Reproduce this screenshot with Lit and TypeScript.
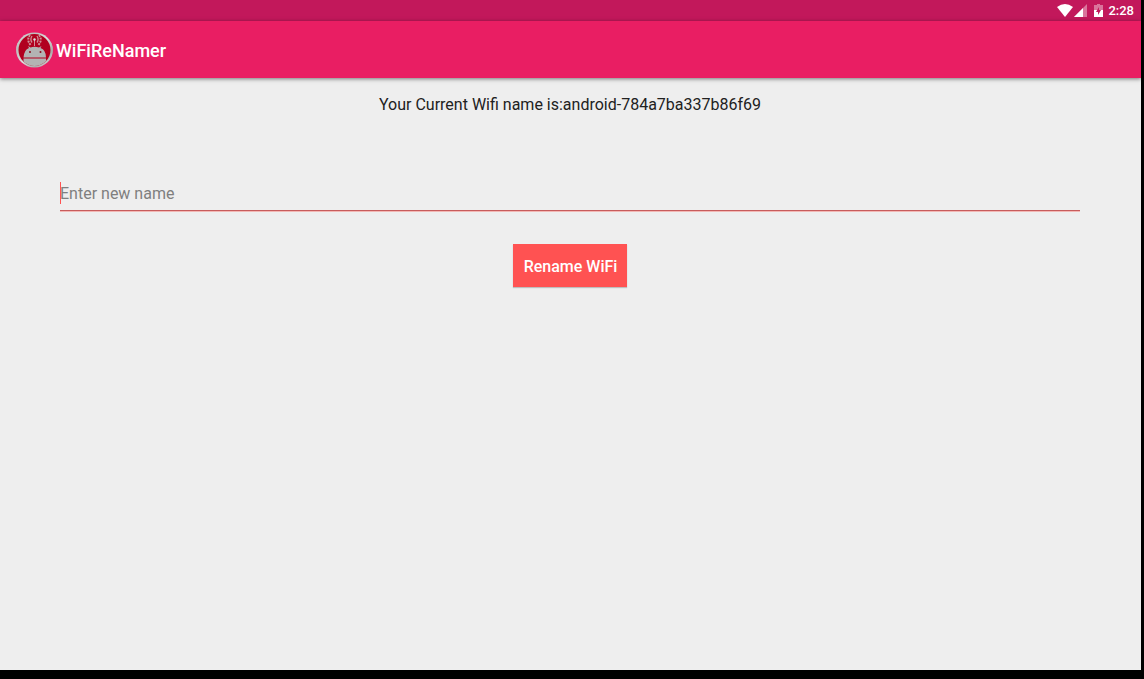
import { LitElement, html, css } from "lit";
import { customElement, property, state } from "lit/decorators.js";

@customElement("status-bar")
class StatusBar extends LitElement {
  static styles = css`
    :host {
      display: flex;
      align-items: center;
      justify-content: flex-end;
      height: 21px;
      padding-right: 7px;
      background: #c2185b;
      color: #fff;
      font-size: 13px;
      font-weight: 500;
      line-height: 21px;
    }
    .signal {
      margin-left: 1px;
    }
    .battery {
      margin: 0 5px 0 6px;
    }
    svg {
      display: block;
    }
  `;

  render() {
    return html`
      <svg width="16" height="13" viewBox="0 0 16 13" aria-label="Wi-Fi">
        <path fill="#fff" d="M0 3Q8-3 16 3L8 13Z" />
      </svg>
      <svg class="signal" width="14" height="13" viewBox="0 0 14 13" aria-label="Signal">
        <path fill="#fff" fill-opacity=".4" d="M13 0V13H0Z" />
        <path fill="#fff" d="M9 4V13H0Z" />
      </svg>
      <svg class="battery" width="9" height="13" viewBox="0 0 9 13" aria-label="Battery charging">
        <path fill="#fff" fill-opacity=".4" d="M3 0H6V1H9V6H0V1H3Z" />
        <path fill="#fff" d="M0 6H9V13H0Z" />
        <path fill="#c2185b" d="M5 3L2 8H4V11L7 6H5Z" />
      </svg>
      <span>2:28</span>
    `;
  }
}

@customElement("app-bar")
class AppBar extends LitElement {
  @property() heading = "";

  static styles = css`
    :host {
      display: flex;
      align-items: center;
      gap: 3px;
      height: 57px;
      padding: 0 15px;
      background: #e91e63;
      box-shadow: 0 1px 4px rgba(0, 0, 0, 0.5);
      color: #fff;
    }
    h1 {
      margin: 0;
      padding-top: 2px;
      font-size: 18px;
      font-weight: 500;
      line-height: 24px;
    }
    svg {
      display: block;
    }
  `;

  render() {
    return html`
      <svg width="38" height="36" viewBox="0 0 38 36" aria-hidden="true">
        <defs>
          <linearGradient id="rim" x1="0" y1="0" x2="1" y2="1">
            <stop offset="0" stop-color="#eee" />
            <stop offset=".25" stop-color="#bbb" />
            <stop offset=".5" stop-color="#ddd" />
            <stop offset=".75" stop-color="#aaa" />
            <stop offset="1" stop-color="#eee" />
          </linearGradient>
          <clipPath id="face"><ellipse cx="19.500" cy="18" rx="16" ry="16" /></clipPath>
        </defs>
        <ellipse cx="19.500" cy="18" rx="18.500" ry="17.500" fill="url(#rim)" />
        <g clip-path="url(#face)">
          <rect width="38" height="36" fill="#b1001f" />
          <g fill="none" stroke="#cf8f97" stroke-width="1.300">
            <path stroke-width="1" d="M19.500 8V14" />
            <path d="M17 4Q14.800 7.500 17 10.500M22 4Q24.200 7.500 22 10.500" />
            <path stroke-width="2" stroke-dasharray="2 1" d="M15 3Q11 8 16 13.500M24 3Q28 8 23 13.500" />
          </g>
          <circle cx="19.500" cy="7.500" r="1.200" fill="#ddd" />
          <path fill="#b3b3b3" d="M8.500 25.500Q9 18 14 16L13 14L15.500 15.500Q19.500 14 24 15.500L26.500 14L25.500 16Q31 18 31 25.500Z" />
          <path fill="#b3b3b3" d="M8.500 26.500H31V36H8.500Z" />
          <circle cx="15" cy="20" r="1" fill="#8a1020" />
          <circle cx="25.500" cy="20" r="1" fill="#8a1020" />
        </g>
      </svg>
      <h1>${this.heading}</h1>
    `;
  }
}

@customElement("app-root")
class AppRoot extends LitElement {
  @state() private current = "android-784a7ba337b86f69";
  @state() private draft = "";

  static styles = css`
    :host {
      display: flex;
      box-sizing: border-box;
      min-height: 100vh;
      padding: 0 3px 9px 0;
      background: #000;
      font-family: Roboto, sans-serif;
    }
    .screen {
      flex: 1;
      background: #eee;
    }
    .content {
      display: flex;
      flex-direction: column;
      align-items: center;
      padding: 17px 61px 16px 60px;
    }
    .current {
      margin: 0 0 58px;
      color: #212121;
      font-size: 16px;
      line-height: 20px;
    }
    .name {
      box-sizing: border-box;
      width: 100%;
      height: 38px;
      margin: 0 0 33px;
      padding: 4px 0 0;
      border: 0;
      border-bottom: 1px solid #c75c5c;
      border-radius: 0;
      outline: 0;
      background: linear-gradient(#ff5252, #ff5252) 0 9px / 1px 22px no-repeat;
      box-shadow: 0 1px 0 #f2b8b5;
      caret-color: #ff5252;
      color: #212121;
      font: 16px/20px Roboto, sans-serif;
    }
    .name::placeholder {
      color: #7f7f7f;
      opacity: 1;
    }
    .rename {
      height: 43px;
      padding: 2px 10px 0 11px;
      border: 0;
      background: #ff5252;
      box-shadow: 0 1px 1px rgba(0, 0, 0, 0.2);
      color: #fff;
      font: 500 16px/20px Roboto, sans-serif;
    }
  `;

  private rename() {
    if (this.draft) this.current = this.draft;
  }

  render() {
    return html`
      <div class="screen">
        <status-bar></status-bar>
        <app-bar heading="WiFiReNamer"></app-bar>
        <main class="content">
          <p class="current">Your Current Wifi name is:${this.current}</p>
          <input
            class="name"
            type="text"
            aria-label="New name"
            placeholder="Enter new name"
            .value=${this.draft}
            @input=${(e: Event) => (this.draft = (e.target as HTMLInputElement).value)}
          />
          <button class="rename" @click=${this.rename}>Rename WiFi</button>
        </main>
      </div>
    `;
  }
}
